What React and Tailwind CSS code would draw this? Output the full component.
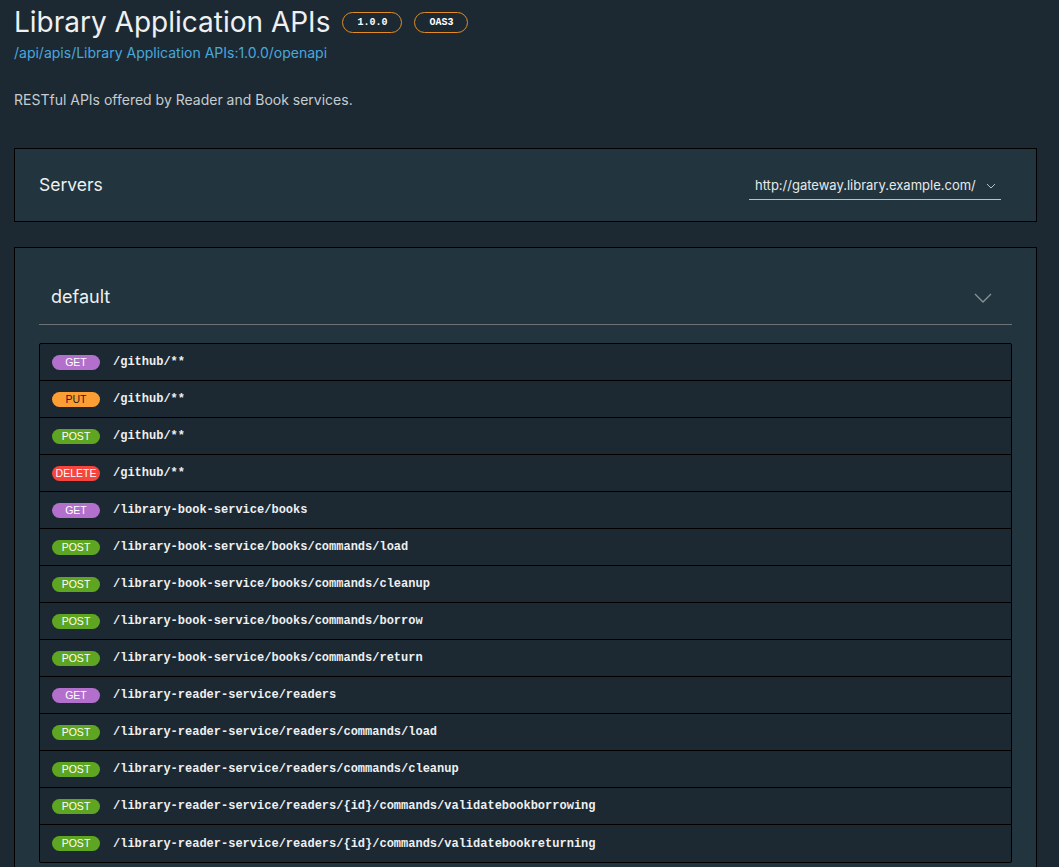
import React from 'react';

const ops = [
    ['GET', '/github/**'],
    ['PUT', '/github/**'],
    ['POST', '/github/**'],
    ['DELETE', '/github/**'],
    ['GET', '/library-book-service/books'],
    ['POST', '/library-book-service/books/commands/load'],
    ['POST', '/library-book-service/books/commands/cleanup'],
    ['POST', '/library-book-service/books/commands/borrow'],
    ['POST', '/library-book-service/books/commands/return'],
    ['GET', '/library-reader-service/readers'],
    ['POST', '/library-reader-service/readers/commands/load'],
    ['POST', '/library-reader-service/readers/commands/cleanup'],
    ['POST', '/library-reader-service/readers/{id}/commands/validatebookborrowing'],
    ['POST', '/library-reader-service/readers/{id}/commands/validatebookreturning'],
];

const methodColors = {
    GET: 'bg-[#b26fcb] text-white',
    PUT: 'bg-[#fc9e34] text-[#222]',
    POST: 'bg-[#5ea621] text-white',
    DELETE: 'bg-[#f5453f] text-white',
};

function Operation({ method, path }) {
    return (
        <div className="h-[37px] flex items-center border-b border-black last:border-b-0 pl-3">
            <span className={`w-12 h-[15px] rounded-full flex items-center justify-center text-[10.5px] leading-none font-['Liberation_Sans',sans-serif] ${methodColors[method]}`}>
                {method}
            </span>
            <span className="ml-[13px] text-[12px] font-bold text-[#eef0f2] font-['Liberation_Mono',monospace]">
                {path}
            </span>
        </div>
    );
}

export default function App() {
    return (
        <div className="min-h-screen bg-[#1c2932] font-['Inter',sans-serif] pl-[14px] pr-[22px] pt-[3px] pb-10">
            {/* Title */}
            <div className="flex items-center">
                <h1 className="text-[28px] leading-[38px] text-[#eef0f2]">Library Application APIs</h1>
                <span className="ml-[12px] w-[60px] h-[21px] rounded-full border border-[#e58c22] flex items-center justify-center text-[10px] font-bold text-white font-['Liberation_Mono',monospace]">1.0.0</span>
                <span className="ml-[12px] w-[54px] h-[21px] rounded-full border border-[#e58c22] flex items-center justify-center text-[10px] font-bold text-white font-['Liberation_Mono',monospace]">OAS3</span>
            </div>
            <a className="block text-[14px] leading-[24px] text-[#4aa7dc]">/api/apis/Library Application APIs:1.0.0/openapi</a>
            <p className="mt-[25px] text-[14px] leading-[20px] text-[#c6ccd0]">RESTful APIs offered by Reader and Book services.</p>

            {/* Servers */}
            <div className="mt-[38px] h-[74px] border border-black bg-[#22343d] flex items-center justify-between pl-6 pr-[35px]">
                <span className="text-[17.5px] text-[#eef0f2]">Servers</span>
                <div className="w-[252px] h-[26px] border-b border-[#b8c2c7] flex items-center justify-between pl-[6px] pr-[5px] mt-[3px]">
                    <span className="text-[13px] text-[#e6e9eb]">http://gateway.library.example.com/</span>
                    <svg width="10" height="6" viewBox="0 0 10 6" fill="none" stroke="#b8c2c7" strokeWidth="1">
                        <path d="M1 1l4 4 4-4" />
                    </svg>
                </div>
            </div>

            {/* Default tag */}
            <div className="mt-[25px] border border-black bg-[#22343d] px-6 pt-[28px]">
                <div className="h-[49px] flex items-center justify-between pl-3 pr-[20px] border-b border-[#6b7175]">
                    <span className="text-[18px] text-[#eef0f2] -mt-[7px]">default</span>
                    <svg className="-mt-[5px]" width="18" height="10" viewBox="0 0 18 10" fill="none" stroke="#8a9296" strokeWidth="1.3">
                        <path d="M1 1l8 8 8-8" />
                    </svg>
                </div>
                <div className="mt-[18px] border border-black bg-[#1c2932] rounded-[2px]">
                    {ops.map(([m, p], i) => (
                        <Operation key={i} method={m} path={p} />
                    ))}
                </div>
                <div className="h-6" />
            </div>
        </div>
    );
}
